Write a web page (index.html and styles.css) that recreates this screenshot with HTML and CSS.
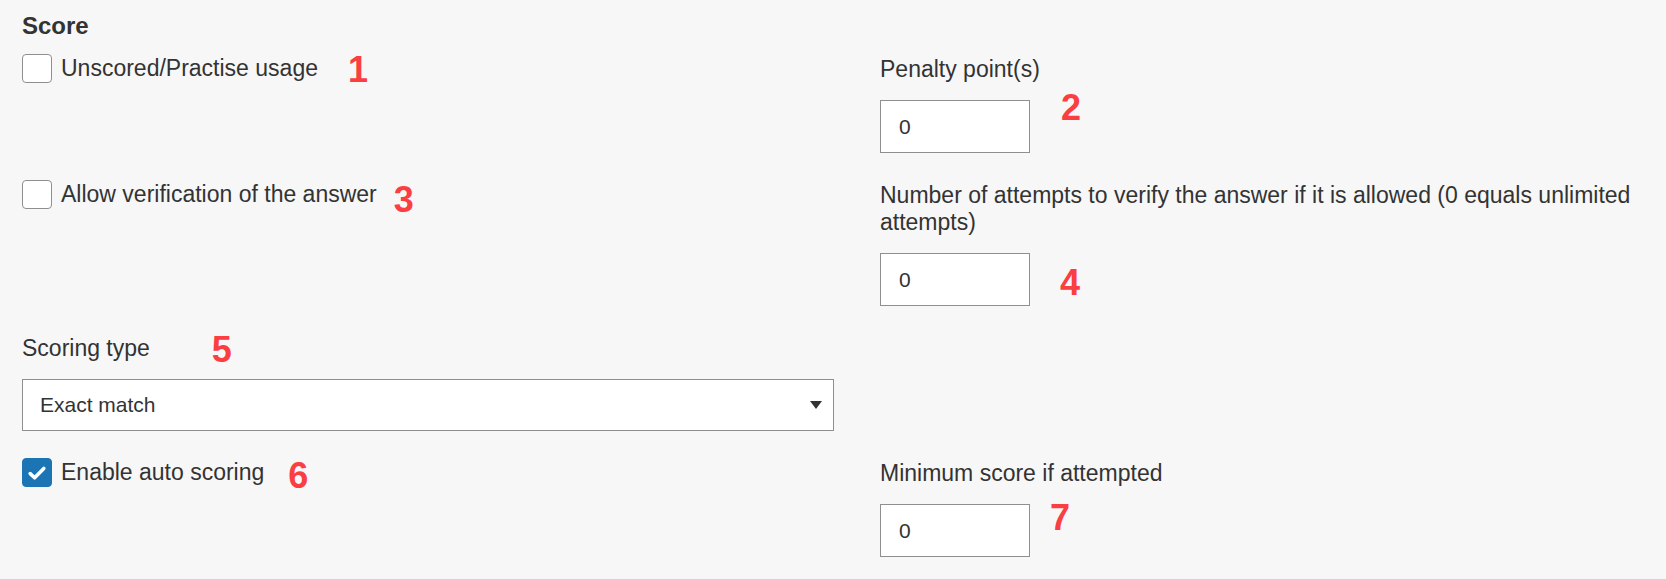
FILE: index.html
```html
<!DOCTYPE html>
<html lang="en">
<head>
<meta charset="utf-8">
<title>Score settings</title>
<link rel="stylesheet" href="styles.css">
</head>
<body>
<main class="panel">
  <h2 class="title">Score</h2>
  <div class="grid">
    <div class="check-row">
      <span class="box"></span>
      <span class="check-label">Unscored/Practise usage</span>
      <span class="mark m1">1</span>
    </div>
    <div class="field">
      <label class="field-label">Penalty point(s)</label>
      <div class="input-row">
        <input class="num" type="text" value="0">
        <span class="mark m2">2</span>
      </div>
    </div>

    <div class="check-row">
      <span class="box"></span>
      <span class="check-label">Allow verification of the answer</span>
      <span class="mark m3">3</span>
    </div>
    <div class="field">
      <label class="field-label">Number of attempts to verify the answer if it is allowed (0 equals unlimited attempts)</label>
      <div class="input-row">
        <input class="num" type="text" value="0">
        <span class="mark m4">4</span>
      </div>
    </div>

    <div class="field">
      <div class="label-row">
        <label class="field-label inline">Scoring type</label>
        <span class="mark m5">5</span>
      </div>
      <div class="select">
        <span class="select-value">Exact match</span>
        <span class="caret"></span>
      </div>
    </div>
    <div class="empty"></div>

    <div class="check-row">
      <span class="box checked">
        <svg viewBox="0 0 30 30" width="30" height="30" aria-hidden="true">
          <path d="M8.2 15.6 L12.6 19.8 L21.8 10.4" fill="none" stroke="#ffffff" stroke-width="3.6" stroke-linecap="round" stroke-linejoin="round"/>
        </svg>
      </span>
      <span class="check-label">Enable auto scoring</span>
      <span class="mark m6">6</span>
    </div>
    <div class="field">
      <label class="field-label">Minimum score if attempted</label>
      <div class="input-row">
        <input class="num" type="text" value="0">
        <span class="mark m7">7</span>
      </div>
    </div>
  </div>
</main>
</body>
</html>
```

FILE: styles.css
```css
* {
  box-sizing: border-box;
}

html, body {
  margin: 0;
  background: #f7f7f7;
}

body {
  font-family: "Liberation Sans", Arial, sans-serif;
  color: #333333;
}

.panel {
  padding: 13px 22px 0 22px;
  min-height: 579px;
}

.title {
  margin: 0 0 15px 0;
  font-size: 24px;
  line-height: 26px;
  font-weight: bold;
  color: #333333;
}

.grid {
  display: grid;
  grid-template-columns: 812px 1fr;
  column-gap: 46px;
  row-gap: 27px;
  align-items: start;
}

.check-row {
  display: flex;
  align-items: flex-start;
}

.box {
  flex: none;
  width: 30px;
  height: 29px;
  border: 1px solid #8f8f8f;
  border-radius: 4px;
  background: #ffffff;
  position: relative;
  overflow: hidden;
}

.box.checked {
  background: #1b74b4;
  border-color: #1b74b4;
}

.box svg {
  display: block;
  margin: -1px 0 0 -1px;
}

.check-label {
  margin: 1px 0 0 9px;
  font-size: 23px;
  line-height: 27px;
  white-space: nowrap;
}

.mark {
  flex: none;
  font-family: "Liberation Sans", Arial, sans-serif;
  font-weight: bold;
  font-size: 36px;
  line-height: 36px;
  color: #fa3e42;
}

.m1 { margin: -2px 0 0 30px; }
.m3 { margin: 2px 0 0 17px; }
.m6 { margin: 0 0 0 24px; }
.m2 { margin: -10px 0 0 31px; }
.m4 { margin: 12px 0 0 30px; }
.m7 { margin: -4px 0 0 20px; }
.m5 { margin: -3px 0 0 62px; }

.field {
  display: flex;
  flex-direction: column;
}

.field-label {
  display: block;
  margin: 2px 0 17px 0;
  font-size: 23px;
  line-height: 27px;
}

.label-row {
  display: flex;
  align-items: flex-start;
  height: 27px;
  margin: 2px 0 17px 0;
}

.field-label.inline {
  margin: 0;
}

.input-row {
  display: flex;
  align-items: flex-start;
}

.num {
  width: 150px;
  height: 53px;
  margin: 0;
  padding: 0 18px;
  border: 1px solid #8f8f8f;
  border-radius: 0;
  background: #ffffff;
  font-family: "Liberation Sans", Arial, sans-serif;
  font-size: 21px;
  color: #333333;
  outline: none;
}

.select {
  display: flex;
  align-items: center;
  justify-content: space-between;
  height: 52px;
  padding: 0 11px 0 17px;
  border: 1px solid #8f8f8f;
  background: #ffffff;
  font-size: 21px;
  color: #333333;
}

.caret {
  width: 0;
  height: 0;
  border-left: 6px solid transparent;
  border-right: 6px solid transparent;
  border-top: 8px solid #333333;
}
```
